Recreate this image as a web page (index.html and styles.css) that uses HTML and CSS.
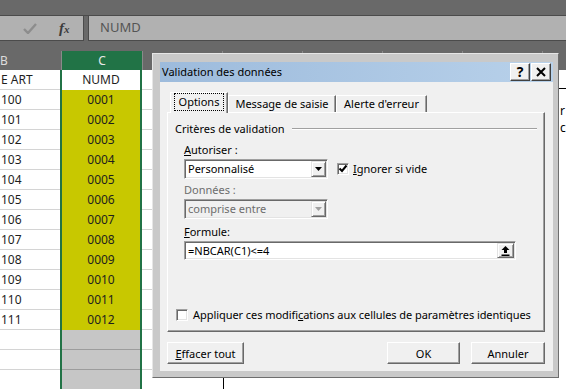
FILE: index.html
```html
<!DOCTYPE html>
<html lang="fr">
<head>
    <meta charset="UTF-8">
    <title>Validation des données</title>
    <link rel="stylesheet" href="styles.css">
</head>
<body>
    <div class="app">
        <div class="topstrip"></div>

        <!-- formula bar -->
        <div class="fbar">
            <div class="namebox">
                <svg class="okmark" width="14" height="11" viewBox="0 0 14 11"><polyline points="1,6 5,10 13,1" fill="none" stroke="#8d8d8d" stroke-width="2.4"/></svg>
                <span class="fx">f<small>x</small></span>
            </div>
            <div class="formula">NUMD</div>
        </div>
        <div class="gap"></div>

        <!-- sheet -->
        <div class="sheet">
            <div class="row hdr"><div class="cb">B</div><div class="cc">C</div><div class="cd"></div></div>
            <div class="row"><div class="cb">E ART</div><div class="cc">NUMD</div><div class="cd"></div></div>
            <div class="row"><div class="cb">100</div><div class="cc y">0001</div><div class="cd"></div></div>
            <div class="row"><div class="cb">101</div><div class="cc y">0002</div><div class="cd"></div></div>
            <div class="row"><div class="cb">102</div><div class="cc y">0003</div><div class="cd"></div></div>
            <div class="row"><div class="cb">103</div><div class="cc y">0004</div><div class="cd"></div></div>
            <div class="row"><div class="cb">104</div><div class="cc y">0005</div><div class="cd"></div></div>
            <div class="row"><div class="cb">105</div><div class="cc y">0006</div><div class="cd"></div></div>
            <div class="row"><div class="cb">106</div><div class="cc y">0007</div><div class="cd"></div></div>
            <div class="row"><div class="cb">107</div><div class="cc y">0008</div><div class="cd"></div></div>
            <div class="row"><div class="cb">108</div><div class="cc y">0009</div><div class="cd"></div></div>
            <div class="row"><div class="cb">109</div><div class="cc y">0010</div><div class="cd"></div></div>
            <div class="row"><div class="cb">110</div><div class="cc y">0011</div><div class="cd"></div></div>
            <div class="row"><div class="cb">111</div><div class="cc y">0012</div><div class="cd"></div></div>
            <div class="row"><div class="cb"></div><div class="cc g"></div><div class="cd"></div></div>
            <div class="row"><div class="cb"></div><div class="cc g"></div><div class="cd"></div></div>
            <div class="row"><div class="cb"></div><div class="cc g"></div><div class="cd"></div></div>
        </div>

        <!-- text box drawn on the sheet -->
        <div class="shape">
            <div>r</div>
            <div>c</div>
        </div>

        <!-- dialog -->
        <div class="dialog">
            <div class="titlebar">
                <span class="title">Validation des données</span>
                <div class="tbtns">
                    <span class="tbtn">?</span>
                    <span class="tbtn"><svg width="10" height="10" viewBox="0 0 10 10"><path d="M1 1L9 9M9 1L1 9" stroke="#000" stroke-width="2"/></svg></span>
                </div>
            </div>
            <div class="client">
                <div class="tabs">
                    <div class="tab active"><span class="focus">Options</span></div>
                    <div class="tab msg">Message de saisie</div>
                    <div class="tab err">Alerte d'erreur</div>
                </div>
                <div class="panel">
                    <div class="group"><span>Critères de validation</span><i class="rule"></i></div>
                    <div class="lbl"><u>A</u>utoriser :</div>
                    <div class="line">
                        <div class="select">
                            <span>Personnalisé</span>
                            <span class="drop"><svg width="7" height="4" viewBox="0 0 7 4"><polygon points="0,0 7,0 3.5,4" fill="#000"/></svg></span>
                        </div>
                        <div class="check ignore">
                            <span class="box"><svg width="10" height="10" viewBox="0 0 10 10"><polyline points="1.5,4.5 4,7 8.5,1.5" fill="none" stroke="#000" stroke-width="2"/></svg></span>
                            <span><u>I</u>gnorer si vide</span>
                        </div>
                    </div>
                    <div class="lbl dis">Données :</div>
                    <div class="select dis">
                        <span>comprise entre</span>
                        <span class="drop"><svg width="7" height="4" viewBox="0 0 7 4"><polygon points="0,0 7,0 3.5,4" fill="#a0a0a0"/></svg></span>
                    </div>
                    <div class="lbl"><u>F</u>ormule:</div>
                    <div class="input">
                        <span>=NBCAR(C1)&lt;=4</span>
                        <span class="collapse"><svg width="9" height="10" viewBox="0 0 9 10"><path d="M4.5 0L8.5 4H6V7H3V4H0.5Z" fill="#000"/><rect x="0.5" y="8.5" width="8" height="1.5" fill="#000"/></svg></span>
                    </div>
                    <div class="check apply">
                        <span class="box"></span>
                        <span class="applytext">Appliquer ces modifi<u>c</u>ations aux cellules de paramètres identiques</span>
                    </div>
                </div>
                <div class="btnrow">
                    <button class="btn clear"><u>E</u>ffacer tout</button>
                    <span class="spacer"></span>
                    <button class="btn ok">OK</button>
                    <button class="btn cancel">Annuler</button>
                </div>
            </div>
        </div>
    </div>
</body>
</html>
```

FILE: styles.css
```css
* {
    box-sizing: border-box;
}
body {
    margin: 0;
    width: 566px;
    height: 389px;
    overflow: hidden;
    font-family: "Noto Sans", sans-serif;
    background: #fff;
}
.app {
    position: relative;
    width: 566px;
    height: 389px;
    overflow: hidden;
    background: #696969;
}

/* formula bar */
.topstrip {
    height: 16px;
    border-bottom: 1px solid #4b4b4b;
}
.fbar {
    display: flex;
    gap: 4px;
    height: 25px;
}
.namebox {
    width: 84px;
    background: #b1b1b1;
    border-right: 1px solid #4b4b4b;
    border-bottom: 1px solid #4b4b4b;
    display: flex;
    align-items: center;
    padding-left: 23px;
}
.okmark {
    margin-top: 1px;
}
.fx {
    margin-left: 22px;
    font-family: "Liberation Serif", serif;
    font-style: italic;
    font-weight: bold;
    font-size: 15px;
    color: #3c3c3c;
    line-height: 1;
}
.fx small {
    font-size: 11px;
}
.formula {
    flex: 1;
    background: #b1b1b1;
    border-left: 1px solid #4b4b4b;
    border-bottom: 1px solid #4b4b4b;
    padding-left: 11px;
    font-size: 13px;
    line-height: 23px;
    color: #555;
}
.gap {
    height: 10px;
}

/* sheet */
.row {
    display: flex;
    height: 20px;
    font-size: 12px;
    line-height: 20px;
    color: #1e1e1e;
}
.cb {
    width: 60px;
    background: #fff;
    box-shadow: inset 0 -1px #d4d4d4;
    padding-left: 1px;
    white-space: nowrap;
    overflow: hidden;
}
.cc {
    width: 82px;
    background: #fff;
    border-left: 2px solid #217346;
    border-right: 2px solid #217346;
    text-align: center;
}
.cc.y {
    background: #c8c800;
}
.cc.g {
    background: #c6c6c6;
    box-shadow: inset 0 -1px #9c9c9c;
}
.cd {
    flex: 1;
    background: #fff;
    box-shadow: inset 0 -1px #d4d4d4;
}
.row.hdr {
    height: 19px;
    line-height: 19px;
    color: #dcdcdc;
}
.hdr .cb {
    width: 62px;
    background: #696969;
    box-shadow: none;
    border-right: 1px solid #8a8a8a;
    text-indent: -1px;
}
.hdr .cc {
    width: 80px;
    background: #217346;
    border: none;
    color: #e8e8e8;
}
.hdr .cd {
    background: #696969 repeating-linear-gradient(to right, transparent 0 79px, #8a8a8a 79px 80px);
    box-shadow: none;
    border-left: 1px solid #8a8a8a;
}

.shape {
    position: absolute;
    left: 223px;
    top: 88px;
    width: 400px;
    height: 340px;
    background: #fff;
    border-left: 1px solid #000;
    border-top: 1px solid #000;
    padding: 13px 0 0 336px;
    font-size: 12px;
    line-height: 17px;
    color: #000;
}

/* dialog */
.dialog {
    position: absolute;
    left: 152px;
    top: 53px;
    width: 407px;
    height: 325px;
    background: #c9c9c9;
    border: 1px solid;
    border-color: #e6e6e6 #6e6e6e #6e6e6e #e6e6e6;
    padding: 8px 5px 6px 7px;
    font-size: 11px;
    color: #000;
}
.titlebar {
    height: 20px;
    display: flex;
    align-items: center;
    justify-content: space-between;
    background: linear-gradient(to right, #9dbbdc, #b8d1ea);
    padding-left: 2px;
}
.title {
    font-size: 11px;
    line-height: 20px;
}
.tbtns {
    display: flex;
    gap: 1px;
    margin-right: 2px;
}
.tbtn {
    width: 20px;
    height: 18px;
    background: #f0f0f0;
    border: 1px solid;
    border-color: #fff #404040 #404040 #fff;
    box-shadow: inset -1px -1px #a0a0a0;
    display: flex;
    align-items: center;
    justify-content: center;
    font-weight: bold;
    font-size: 14px;
    line-height: 1;
}
.client {
    height: 289px;
    background: #f0f0f0;
    padding: 10px 8px 0 7px;
}
.tabs {
    display: flex;
    align-items: flex-start;
    height: 20px;
    margin-left: 3px;
}
.tab {
    height: 17px;
    margin-top: 3px;
    border: 1px solid;
    border-bottom: none;
    border-color: #fff #696969 transparent #fff;
    box-shadow: inset -1px 0 #a0a0a0;
    text-align: center;
    line-height: 15px;
    white-space: nowrap;
}
.tab.active {
    width: 58px;
    height: 21px;
    margin-top: 0;
    position: relative;
    z-index: 1;
    background: #f0f0f0;
}
.tab.msg {
    width: 108px;
}
.tab.err {
    width: 91px;
}
.focus {
    display: inline-block;
    border: 1px dotted #000;
    padding: 0 4px;
    line-height: 16px;
}
.panel {
    height: 220px;
    border: 1px solid;
    border-color: #fff #696969 #696969 #fff;
    box-shadow: inset -1px -1px #a0a0a0;
    padding: 8px 7px 0 7px;
}
.group {
    display: flex;
    align-items: center;
    height: 16px;
    line-height: 16px;
}
.rule {
    flex: 1;
    height: 2px;
    margin-left: 7px;
    border-top: 1px solid #a0a0a0;
    border-bottom: 1px solid #fff;
}
.lbl {
    height: 16px;
    line-height: 16px;
    margin-left: 9px;
    margin-top: 5px;
}
.lbl.dis {
    color: #6d6d6d;
    margin-top: 3px;
}
.line {
    display: flex;
    align-items: center;
}
.select,
.input {
    display: flex;
    align-items: center;
    justify-content: space-between;
    width: 144px;
    height: 20px;
    margin-left: 9px;
    margin-top: 1px;
    background: #fff;
    border: 1px solid;
    border-color: #a0a0a0 #fff #fff #a0a0a0;
    box-shadow: inset 1px 1px #696969, inset -1px -1px #e3e3e3;
    padding: 0 1px 0 3px;
    line-height: 16px;
}
.select.dis {
    background: #f0f0f0;
    color: #6d6d6d;
}
.drop,
.collapse {
    width: 15px;
    height: 16px;
    background: #f0f0f0;
    border: 1px solid;
    border-color: #e3e3e3 #696969 #696969 #e3e3e3;
    box-shadow: inset 1px 1px #fff, inset -1px -1px #a0a0a0;
    display: flex;
    align-items: center;
    justify-content: center;
}
.input {
    width: 332px;
    height: 19px;
}
.collapse {
    width: 17px;
    height: 15px;
}
.check {
    display: flex;
    align-items: center;
    line-height: 16px;
}
.box {
    width: 12px;
    height: 12px;
    background: #fff;
    border: 1px solid;
    border-color: #a0a0a0 #fff #fff #a0a0a0;
    box-shadow: inset 1px 1px #696969, inset -1px -1px #e3e3e3;
    display: flex;
    align-items: center;
    justify-content: center;
}
.ignore {
    margin-left: 9px;
    margin-top: 1px;
    gap: 4px;
}
.apply {
    margin-top: 47px;
    margin-left: 1px;
    gap: 5px;
}
.applytext {
    letter-spacing: -0.06px;
}
.btnrow {
    display: flex;
    margin-top: 10px;
    gap: 11px;
}
.spacer {
    flex: 1;
}
.btn {
    height: 22px;
    padding: 0;
    font-family: "Noto Sans", sans-serif;
    font-size: 11px;
    color: #000;
    background: #f0f0f0;
    border: 1px solid;
    border-color: #fff #696969 #696969 #fff;
    box-shadow: inset -1px -1px #a0a0a0;
}
.btn.clear {
    width: 77px;
}
.btn.ok {
    width: 73px;
}
.btn.cancel {
    width: 74px;
}
```
